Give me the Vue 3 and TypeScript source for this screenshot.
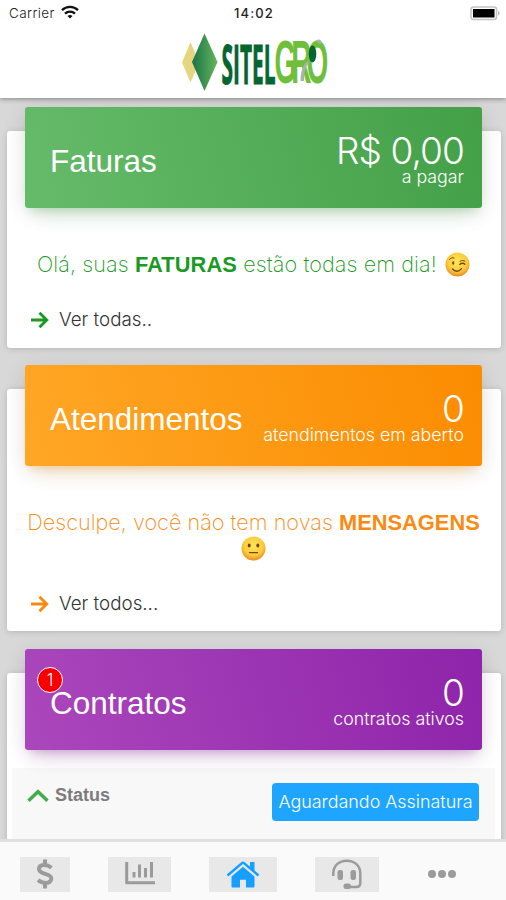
<script setup lang="ts">
interface Summary {
  id: string
  title: string
  value: string
  caption: string
  before?: string
  strong?: string
  after?: string
  face?: 'wink' | 'neutral'
  link?: string
  badge?: number
}

const summaries: Summary[] = [
  {
    id: 'faturas',
    title: 'Faturas',
    value: 'R$ 0,00',
    caption: 'a pagar',
    before: 'Olá, suas',
    strong: 'FATURAS',
    after: 'estão todas em dia!',
    face: 'wink',
    link: 'Ver todas..',
  },
  {
    id: 'atendimentos',
    title: 'Atendimentos',
    value: '0',
    caption: 'atendimentos em aberto',
    before: 'Desculpe, você não tem novas',
    strong: 'MENSAGENS',
    face: 'neutral',
    link: 'Ver todos...',
  },
  {
    id: 'contratos',
    title: 'Contratos',
    value: '0',
    caption: 'contratos ativos',
    badge: 1,
  },
]
</script>

<template>
  <div class="app">
    <header class="top">
      <div class="status">
        <div class="carrier">
          <span>Carrier</span>
          <svg width="18" height="14" viewBox="0 0 18 14" fill="none" stroke="#111" stroke-width="2.3">
            <path d="M1 5.2a11.5 11.5 0 0 1 16 0" />
            <path d="M4 8.6a7.2 7.2 0 0 1 10 0" />
            <path d="M9 13.6 6.5 11.1a3.6 3.6 0 0 1 5 0z" fill="#111" stroke="none" />
          </svg>
        </div>
        <span class="clock">14:02</span>
        <svg class="battery" width="31" height="15" viewBox="0 0 31 15">
          <rect x="1" y="1" width="25.500" height="12.500" rx="2.500" fill="#fff" stroke="#c4c4c4" stroke-width="1.500" />
          <rect x="3" y="3" width="21.500" height="8.500" fill="#000" />
          <path d="M28 5c2 .6 2 4 0 4.600z" fill="#bbb" />
        </svg>
      </div>
      <svg class="logo" width="150" height="78" viewBox="0 -8 150 78">
        <defs>
          <linearGradient id="gem" x1="0" x2="1">
            <stop offset="0" stop-color="#187447" />
            <stop offset="1" stop-color="#66b45c" />
          </linearGradient>
        </defs>
        <path d="M10.500 10 19 30.500 10.500 50.500 2 30.500z" fill="#e6d57e" />
        <path d="M24.500 1.500 37.500 30 24.500 59 12 30z" fill="url(#gem)" />
        <text class="word" x="41.500" y="51.500" font-size="53" fill="#04652f" stroke="#04652f" stroke-width="1" textLength="54" lengthAdjust="spacingAndGlyphs">SITEL</text>
        <text class="word round" transform="translate(94.500 51) scale(.46 1)" font-size="61" fill="#70bf3c">GRO</text>
        <ellipse cx="132.500" cy="22" rx="3.800" ry="8.500" fill="#04652f" />
        <path d="M120.500 49c.2-10 2.500-17 7.500-20l1 2c-4 4-5 10-5 18z" fill="#a9b3a6" />
        <path d="M136 8.500c3-2 5-1 6 2l-2 2z" fill="#a9b3a6" />
      </svg>
    </header>

    <main class="content">
      <section v-for="item in summaries" :key="item.id" class="card" :class="item.id">
        <div class="banner">
          <h2>{{ item.title }}</h2>
          <span v-if="item.badge" class="badge">{{ item.badge }}</span>
          <div class="figures">
            <span class="value">{{ item.value }}</span>
            <span class="caption">{{ item.caption }}</span>
          </div>
        </div>

        <template v-if="item.link">
          <p class="message">
            <span class="thin">{{ item.before }}</span>{{ ' ' }}<b>{{ item.strong }}</b>{{ ' ' }}<span v-if="item.after" class="thin">{{ item.after }}</span>{{ ' ' }}
            <svg class="face" width="25" height="25" viewBox="0 0 25 25">
              <defs>
                <radialGradient :id="`skin-${item.id}`" cx=".5" cy=".38" r=".62">
                  <stop offset="0" stop-color="#ffe65c" />
                  <stop offset=".65" stop-color="#fccb3b" />
                  <stop offset="1" stop-color="#eb8d22" />
                </radialGradient>
              </defs>
              <circle cx="12.500" cy="12.500" r="12" :fill="`url(#skin-${item.id})`" />
              <g v-if="item.face === 'wink'" fill="none" stroke="#754410" stroke-linecap="round">
                <path d="M4.500 7.500c1-1.500 2.500-2 4.500-1.500M15 9.200c2-1 4-.9 5 .2" stroke-width="1" />
                <ellipse cx="8.200" cy="11" rx="1.100" ry="1.700" fill="#754410" stroke="none" />
                <path d="M14.800 12.400c1.500-1.500 3.700-1.500 5-.2M7.500 17c2.500 3 6.500 3 9-.3" stroke-width="1.400" />
              </g>
              <g v-else fill="#754410">
                <ellipse cx="8.200" cy="9.500" rx="1.500" ry="1.900" />
                <ellipse cx="16.800" cy="9.500" rx="1.500" ry="1.900" />
                <path d="M8.500 16.600h8" stroke="#754410" stroke-width="1.400" stroke-linecap="round" />
              </g>
            </svg>
          </p>
          <a class="more">
            <svg width="18" height="18" viewBox="0 0 18 18" fill="none" stroke="currentColor" stroke-width="2.900">
              <path d="M0 9h15.500M8.500 1.800 15.700 9l-7.200 7.200" />
            </svg>
            <span>{{ item.link }}</span>
          </a>
        </template>

        <div v-else class="panel">
          <div class="toggle">
            <svg width="22" height="14" viewBox="0 0 22 14" fill="none" stroke="#43ad4b" stroke-width="3.400">
              <path d="M1.500 12.800 11 3.700l9.500 9.100" />
            </svg>
            <span>Status</span>
          </div>
          <span class="tag">Aguardando Assinatura</span>
        </div>
      </section>
    </main>

    <nav class="tabs">
      <a class="tab dollar">
        <svg width="20" height="30" viewBox="0 0 20 30" fill="none" stroke="currentColor" stroke-width="4">
          <path d="M10 .5v5.500M10 24v5.500" />
          <path d="M16.500 8.700C14 6.700 11.500 6 9 6c-3 0-5 1.500-5 4.100 0 6 12.300 3.500 12.300 9.500 0 2.800-2.400 4.400-5.600 4.400-2.900 0-5.600-1-7.700-2.900" />
        </svg>
      </a>
      <a class="tab chart">
        <svg width="30" height="24" viewBox="0 0 30 24" fill="none" stroke="currentColor" stroke-width="3">
          <path d="M1.700 0v20.800H30" stroke-linejoin="round" />
          <path d="M9 10v5.500M14.500 2.500v13M20.500 6v9.500M26.500 0v15.500" />
        </svg>
      </a>
      <a class="tab home">
        <svg width="34" height="28" viewBox="0 0 34 28" fill="currentColor">
          <path d="M17 6.800 28.500 16.500v9.800c0 .8-.4 1.200-1.200 1.200H20v-7.800h-6v7.800H6.700c-.8 0-1.200-.4-1.200-1.200v-9.800z" />
          <path d="M1.500 15.500 15.700 3.400c.8-.7 1.800-.7 2.600 0l14.200 12.100" fill="none" stroke="currentColor" stroke-width="2.500" />
          <path d="M24 2h4.500v10L24 8z" />
        </svg>
      </a>
      <a class="tab support">
        <svg width="32" height="30" viewBox="0 0 32 30" fill="none" stroke="currentColor">
          <path d="M2.300 17v-2.500C2.300 6.700 8 1.700 15.800 1.700S29.300 6.700 29.300 14.500V24c0 2.700-1.500 4-4 4H15" stroke-width="2.500" />
          <rect x="6.500" y="11" width="5.500" height="10" rx="2.200" fill="currentColor" stroke="none" />
          <rect x="19.500" y="11" width="5.500" height="10" rx="2.200" fill="currentColor" stroke="none" />
          <rect x="12.500" y="24.500" width="7.500" height="5.500" rx="2.500" fill="currentColor" stroke="none" />
        </svg>
      </a>
      <a class="tab dots">
        <svg width="28" height="8" viewBox="0 0 28 8" fill="currentColor">
          <circle cx="4" cy="4" r="4" />
          <circle cx="14" cy="4" r="4" />
          <circle cx="24" cy="4" r="4" />
        </svg>
      </a>
    </nav>
  </div>
</template>

<style>
body {
  background: #d8d8d8;
  overflow: hidden;
}
</style>

<style scoped>
.app {
  display: flex;
  flex-direction: column;
  height: 900px;
  overflow: hidden;
  background: #d8d8d8;
  font-family: "Liberation Sans", sans-serif;
}
.top {
  position: relative;
  z-index: 2;
  display: flex;
  flex: none;
  flex-direction: column;
  align-items: center;
  height: 98px;
  background: #fff;
  box-shadow: 0 1px 5px rgba(0, 0, 0, .4);
}
.status {
  display: grid;
  grid-template-columns: 1fr auto 1fr;
  align-items: center;
  align-self: stretch;
  flex: none;
  height: 26px;
  padding: 0 5px 0 9px;
  font-family: Inter, sans-serif;
  font-size: 13px;
  color: #222;
}
.carrier {
  display: flex;
  align-items: center;
  gap: 6px;
  font-size: 13.500px;
  font-weight: 300;
  letter-spacing: .4px;
}
.carrier svg {
  margin-top: -3px;
}
.clock {
  margin-right: 2px;
  font-weight: 500;
  letter-spacing: 1.100px;
}
.battery {
  justify-self: end;
}
.logo {
  flex: none;
  margin: -2px 0 0 4px;
  overflow: visible;
}
.word {
  font-family: "Open Sans", sans-serif;
  font-weight: 700;
}
.round {
  font-family: "Liberation Sans", sans-serif;
  letter-spacing: -11px;
}
.content {
  flex: 1;
  min-height: 0;
  padding: 33px 5px 0 7px;
  overflow: hidden;
}
.card {
  height: 217px;
  margin-bottom: 41px;
  background: #fff;
  border-radius: 3px;
  box-shadow: 0 1px 6px rgba(0, 0, 0, .16);
}
.atendimentos {
  height: 242px;
  margin-bottom: 42px;
}
.banner {
  position: relative;
  top: -24px;
  display: flex;
  align-items: center;
  justify-content: space-between;
  height: 101px;
  margin: 0 19px -24px 18px;
  padding: 0 18px 0 25px;
  box-sizing: border-box;
  border-radius: 3px;
  color: #fff;
}
.faturas .banner {
  background: linear-gradient(75deg, #66bb6a, #43a047);
  box-shadow: 0 12px 20px -10px rgba(76, 175, 80, .28), 0 4px 22px rgba(0, 0, 0, .11), 0 7px 8px -5px rgba(76, 175, 80, .2);
}
.atendimentos .banner {
  background: linear-gradient(75deg, #ffa726, #fb8c00);
  box-shadow: 0 12px 20px -10px rgba(255, 152, 0, .28), 0 4px 22px rgba(0, 0, 0, .11), 0 7px 8px -5px rgba(255, 152, 0, .2);
}
.contratos .banner {
  background: linear-gradient(75deg, #ab47bc, #8e24aa);
  box-shadow: 0 12px 20px -10px rgba(156, 39, 176, .28), 0 4px 22px rgba(0, 0, 0, .11), 0 7px 8px -5px rgba(156, 39, 176, .2);
}
h2 {
  margin: 7px 0 0;
  font-size: 31.500px;
  font-weight: 400;
  line-height: 36px;
}
.badge {
  position: absolute;
  top: 18px;
  left: 12px;
  width: 24px;
  height: 24px;
  border: 1.500px solid #fff;
  border-radius: 50%;
  background: #f80000;
  font-family: Inter, sans-serif;
  font-size: 17px;
  font-weight: 300;
  line-height: 24px;
  text-align: center;
}
.figures {
  display: flex;
  flex-direction: column;
  align-items: flex-end;
  margin-top: 5px;
  font-family: Inter, sans-serif;
  font-weight: 300;
}
.value {
  font-size: 37px;
  font-weight: 300;
  line-height: 33px;
  letter-spacing: -.9px;
}
.caption {
  font-size: 17.800px;
  line-height: 20px;
}
.message {
  margin: 43px 0 0;
  padding: 0 14px 0 13px;
  font-size: 22px;
  line-height: 26px;
  text-align: center;
}
.message b {
  font-size: 21.800px;
}
.thin {
  font-family: Inter, sans-serif;
  font-size: 21.600px;
  font-weight: 200;
}
.face {
  vertical-align: -5px;
}
.faturas .face {
  margin-left: 2px;
}
.faturas .message {
  letter-spacing: .1px;
}
.atendimentos .message {
  letter-spacing: .03px;
}
.faturas .message,
.faturas .more {
  color: #1a9a25;
}
.atendimentos .message,
.atendimentos .more {
  color: #fb8a12;
}
.more {
  display: flex;
  align-items: center;
  gap: 10px;
  margin: 30px 0 0 24px;
  line-height: 24px;
}
.more span {
  font-family: Inter, sans-serif;
  font-size: 18.800px;
  font-weight: 300;
  color: #333;
}
.panel {
  display: flex;
  align-items: flex-start;
  justify-content: space-between;
  height: 80px;
  margin: 18px 6px 0 5px;
  padding: 15px 16px 0 15px;
  box-sizing: border-box;
  background: #f8f8f8;
}
.toggle {
  display: flex;
  align-items: center;
  gap: 6px;
  font-size: 18px;
  font-weight: 700;
  line-height: 24px;
  color: #7c7c7c;
}
.tag {
  width: 207px;
  height: 38px;
  border-radius: 4px;
  background: #1da5ff;
  color: #fff;
  font-family: Inter, sans-serif;
  font-size: 17.900px;
  font-weight: 300;
  line-height: 37px;
  text-align: center;
}
.tabs {
  position: relative;
  display: flex;
  flex: none;
  height: 61px;
  padding: 15px 0 0 20px;
  box-sizing: border-box;
  border-top: 3px solid #dfdfdf;
  background: #fafafa;
  color: #9b9b9b;
}
.tab {
  display: flex;
  align-items: center;
  justify-content: center;
  height: 35px;
  background: #e8e8e8;
}
.dollar { width: 50px; }
.chart { width: 63px; margin-left: 38px; }
.home { width: 68px; margin-left: 38px; color: #169fff; }
.support { width: 64px; margin-left: 38px; }
.dots { width: 50px; margin-left: 38px; background: none; }
.dollar svg,
.chart svg,
.home svg,
.support svg {
  margin-top: -2px;
}
.dots svg {
  margin-top: -2px;
}
</style>
